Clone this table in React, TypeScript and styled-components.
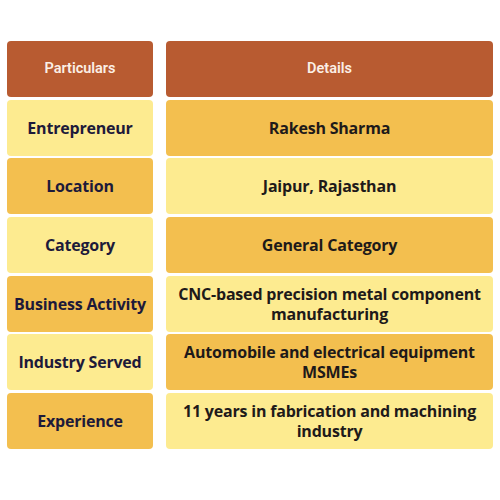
import React from "react";
import styled, { createGlobalStyle } from "styled-components";

const Global = createGlobalStyle`
  html, body { margin: 0; padding: 0; background: #ffffff; }
  body { font-family: "Open Sans", "Noto Sans", sans-serif; }
`;

const Page = styled.div`
  width: 500px;
  height: 500px;
  box-sizing: border-box;
  padding: 41px 7px 0 7px;
  background: #ffffff;
`;

const Table = styled.div`
  display: grid;
  grid-template-columns: 146px 327px;
  column-gap: 13px;
  row-gap: 2.7px;
  grid-auto-rows: 56px;
`;

type Tone = "head" | "light" | "dark";

const bg: Record<Tone, string> = {
  head: "#B85B31",
  light: "#FDEB90",
  dark: "#F3BF4F",
};

const Cell = styled.div<{ $tone: Tone; $side: "left" | "right" }>`
  display: flex;
  align-items: center;
  justify-content: center;
  text-align: center;
  border-radius: 4px;
  background: ${(p) => bg[p.$tone]};
  padding: 0 4px;
  box-sizing: border-box;
  font-family: ${(p) =>
    p.$tone === "head"
      ? '"Roboto", "Open Sans", sans-serif'
      : '"Open Sans", "Lato", sans-serif'};
  font-weight: ${(p) => (p.$tone === "head" ? 600 : 700)};
  font-size: ${(p) => (p.$tone === "head" ? "14.5px" : "16px")};
  letter-spacing: ${(p) => (p.$tone === "head" ? "0" : "-0.2px")};
  line-height: 20px;
  color: ${(p) =>
    p.$tone === "head" ? "#FBEFE6" : p.$side === "left" ? "#1D1A3A" : "#1E1A1A"};
`;

const rows: { k: string; v: string; left: Tone; right: Tone }[] = [
  { k: "Entrepreneur", v: "Rakesh Sharma", left: "light", right: "dark" },
  { k: "Location", v: "Jaipur, Rajasthan", left: "dark", right: "light" },
  { k: "Category", v: "General Category", left: "light", right: "dark" },
  {
    k: "Business Activity",
    v: "CNC-based precision metal component manufacturing",
    left: "dark",
    right: "light",
  },
  {
    k: "Industry Served",
    v: "Automobile and electrical equipment MSMEs",
    left: "light",
    right: "dark",
  },
  {
    k: "Experience",
    v: "11 years in fabrication and machining industry",
    left: "dark",
    right: "light",
  },
];

export default function App() {
  return (
    <Page>
      <Global />
      <Table>
        <Cell $tone="head" $side="left">Particulars</Cell>
        <Cell $tone="head" $side="right">Details</Cell>
        {rows.map((r) => (
          <React.Fragment key={r.k}>
            <Cell $tone={r.left} $side="left">{r.k}</Cell>
            <Cell $tone={r.right} $side="right">{r.v}</Cell>
          </React.Fragment>
        ))}
      </Table>
    </Page>
  );
}
